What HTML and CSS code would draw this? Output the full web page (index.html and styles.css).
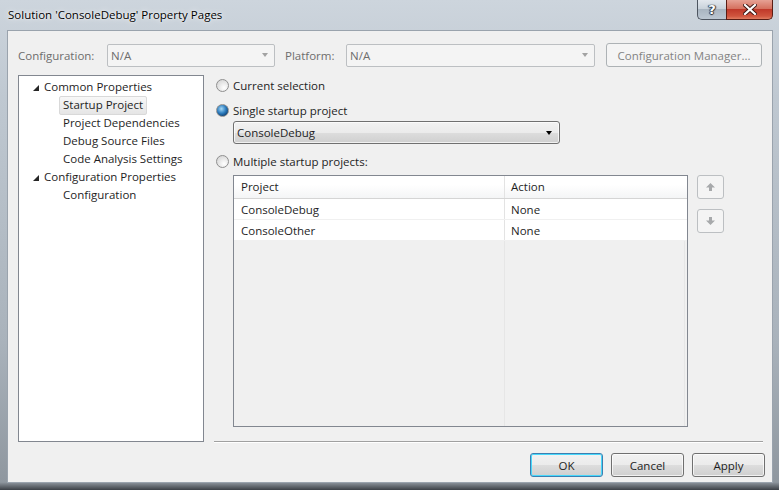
FILE: index.html
```html
<!DOCTYPE html>
<html lang="en">
  <head>
    <meta charset="UTF-8" />
    <title>Solution 'ConsoleDebug' Property Pages</title>
    <link rel="stylesheet" href="styles.css">
  </head>
  <body>
    <div class="window">
      <div class="titlebar">
        <span class="title">Solution 'ConsoleDebug' Property Pages</span>
        <div class="caption">
          <span class="cap help">?</span>
          <span class="cap close">
            <svg width="14" height="11" viewBox="0 0 14 11">
              <path d="M2 1 L12 10 M12 1 L2 10" stroke="#3b1410" stroke-width="4" stroke-linecap="square" />
              <path d="M2 1 L12 10 M12 1 L2 10" stroke="#fff" stroke-width="2.2" stroke-linecap="square" />
            </svg>
          </span>
        </div>
      </div>

      <div class="client">
        <div class="config-row">
          <span class="label label-config">Configuration:</span>
          <div class="combo disabled combo-config"><span>N/A</span><i class="arrow"></i></div>
          <span class="label label-platform">Platform:</span>
          <div class="combo disabled combo-platform"><span>N/A</span><i class="arrow"></i></div>
          <button class="btn disabled btn-manager">Configuration Manager...</button>
        </div>

        <div class="main">
          <div class="tree">
            <div class="node top"><i class="glyph"></i>Common Properties</div>
            <div class="node child"><span class="selected">Startup Project</span></div>
            <div class="node child"><span>Project Dependencies</span></div>
            <div class="node child"><span>Debug Source Files</span></div>
            <div class="node child"><span>Code Analysis Settings</span></div>
            <div class="node top"><i class="glyph"></i>Configuration Properties</div>
            <div class="node child"><span>Configuration</span></div>
          </div>

          <div class="pane">
            <label class="radio r1"><i class="dot"></i>Current selection</label>
            <label class="radio r2"><i class="dot checked"></i>Single startup project</label>
            <div class="combo project-combo"><span>ConsoleDebug</span><i class="arrow dark"></i></div>
            <label class="radio r3"><i class="dot"></i>Multiple startup projects:</label>

            <div class="grid-row">
              <div class="grid">
                <div class="grid-head">
                  <div class="col-project">Project</div>
                  <div class="col-action">Action</div>
                </div>
                <div class="grid-line">
                  <div class="col-project">ConsoleDebug</div>
                  <div class="col-action">None</div>
                </div>
                <div class="grid-line">
                  <div class="col-project">ConsoleOther</div>
                  <div class="col-action">None</div>
                </div>
                <div class="grid-empty">
                  <div class="col-project"></div>
                  <div class="col-action"></div>
                </div>
              </div>
              <div class="movers">
                <button class="mover">
                  <svg width="9" height="8" viewBox="0 0 9 8"><path d="M4.5 0 L9 4.5 H6 V8 H3 V4.5 H0 Z" fill="#a7a9ab" /></svg>
                </button>
                <button class="mover">
                  <svg width="9" height="8" viewBox="0 0 9 8"><path d="M4.5 8 L9 3.5 H6 V0 H3 V3.5 H0 Z" fill="#a7a9ab" /></svg>
                </button>
              </div>
            </div>
          </div>
        </div>

        <div class="buttons">
          <button class="btn default">OK</button>
          <button class="btn">Cancel</button>
          <button class="btn">Apply</button>
        </div>
      </div>
    </div>
  </body>
</html>
```

FILE: styles.css
```css
body {
  margin: 0;
  width: 779px;
  height: 490px;
  overflow: hidden;
  font-family: "Open Sans", "Noto Sans", sans-serif;
  font-size: 11.5px;
  color: #1e1e1e;
  background: linear-gradient(180deg, #cdd5dd 0%, #bfc8d1 20%, #a9b2bb 70%, #8f979f 98.4%, #3c4046 100%);
}

.window {
  height: 490px;
  padding: 0 6px 7px 7px;
  box-sizing: border-box;
  display: flex;
  flex-direction: column;
}

.titlebar {
  height: 30px;
  display: flex;
  justify-content: space-between;
  align-items: flex-start;
}

.title {
  margin: 7px 0 0 1px;
  font-size: 11.5px;
  color: #000;
  text-shadow: 0 0 6px rgba(255, 255, 255, 0.9), 0 0 2px rgba(255, 255, 255, 0.9);
}

.caption {
  display: flex;
}

.cap {
  height: 20px;
  display: flex;
  align-items: center;
  justify-content: center;
  border: 1px solid #4d5560;
  border-top: none;
  box-sizing: border-box;
}

.help {
  width: 29px;
  border-right: none;
  border-bottom-left-radius: 5px;
  background: linear-gradient(180deg, #e3e8ee 0%, #c9d2db 45%, #a9b5c1 50%, #bcc7d2 100%);
  color: #fff;
  font-family: "DejaVu Sans", sans-serif;
  font-weight: bold;
  font-size: 13px;
  text-shadow: 0 0 1px #2d3540, 1px 0 1px #2d3540, -1px 0 1px #2d3540, 0 1px 1px #2d3540;
}

.close {
  width: 47px;
  border-color: #5a1d14;
  border-bottom-right-radius: 5px;
  background: linear-gradient(180deg, #e6a194 0%, #d5715f 45%, #c0392a 50%, #d0553e 85%, #e07d62 100%);
}

.client {
  flex: 1;
  background: #f0f0f0;
  border: 1px solid #9aa3ad;
  display: flex;
  flex-direction: column;
}

/* configuration row */

.config-row {
  display: flex;
  align-items: center;
  margin: 12px 0 0 10px;
  height: 24px;
}

.label {
  color: #6d6d6d;
}

.label-config {
  width: 89px;
}

.label-platform {
  width: 61px;
  margin-left: 10px;
}

.combo {
  height: 23px;
  box-sizing: border-box;
  display: flex;
  align-items: center;
  justify-content: space-between;
  padding: 0 6px 0 3px;
  border: 1px solid #707070;
  border-radius: 2px;
}

.combo.disabled {
  border-color: #bcbfc2;
  background: #f4f4f4;
  color: #6d6d6d;
}

.combo-config {
  width: 168px;
}

.combo-platform {
  width: 249px;
}

.arrow {
  width: 0;
  height: 0;
  border-left: 3.5px solid transparent;
  border-right: 3.5px solid transparent;
  border-top: 4px solid #a2a2a2;
}

.arrow.dark {
  border-top-color: #000;
}

.btn {
  font: inherit;
  color: #1e1e1e;
  width: 73px;
  height: 24px;
  padding: 0;
  border: 1px solid #707070;
  border-radius: 3px;
  background: linear-gradient(180deg, #f2f2f2 0%, #ebebeb 50%, #dddddd 51%, #cfcfcf 100%);
  box-shadow: inset 0 0 0 1px rgba(255, 255, 255, 0.7);
}

.btn.disabled {
  border-color: #adb2b5;
  background: #f4f4f4;
  color: #838383;
  box-shadow: none;
}

.btn-manager {
  width: 156px;
  margin-left: 11px;
}

/* tree and pane */

.main {
  display: flex;
  margin: 8px 0 0 10px;
  height: 367px;
}

.tree {
  width: 186px;
  box-sizing: border-box;
  background: #fff;
  border: 1px solid #828790;
  padding-top: 2px;
}

.node {
  height: 18px;
  line-height: 18px;
  white-space: nowrap;
}

.node.top {
  padding-left: 14px;
}

.glyph {
  display: inline-block;
  width: 6px;
  height: 6px;
  margin-right: 5px;
  background: #262626;
  clip-path: polygon(100% 0, 100% 100%, 0 100%);
  vertical-align: 0;
}

.node.child {
  padding-left: 40px;
}

.node.child span {
  display: inline-block;
  padding: 0 3px;
  height: 17px;
  line-height: 16px;
  border: 1px solid transparent;
  border-radius: 2px;
}

.node.child span.selected {
  border-color: #d9d9d9;
  background: linear-gradient(180deg, #f8f8f8, #e5e5e5);
}

.pane {
  width: 549px;
  margin-left: 10px;
  padding-left: 2px;
  box-sizing: border-box;
  border-bottom: 1px solid #a0a0a0;
  box-shadow: 0 1px 0 #fff;
  display: flex;
  flex-direction: column;
  align-items: flex-start;
}

.radio {
  display: flex;
  align-items: center;
  height: 18px;
}

.r1 {
  margin-top: 1px;
}

.r2 {
  margin-top: 7px;
}

.r3 {
  margin-top: 8px;
}

.dot {
  width: 13px;
  height: 13px;
  box-sizing: border-box;
  border-radius: 50%;
  border: 1px solid #8f8f8f;
  background: radial-gradient(circle at 65% 70%, #ffffff 0%, #e6e6e6 50%, #cfcfcf 100%);
  margin-right: 4px;
}

.dot.checked {
  background: radial-gradient(circle at 40% 35%, #a6d9f6 0%, #2e7ec0 45%, #0d3f72 80%, #dcdcdc 82%, #f4f4f4 100%);
}

.project-combo {
  width: 327px;
  margin: 2px 0 0 17px;
  border-radius: 3px;
  background: linear-gradient(180deg, #f2f2f2 0%, #ebebeb 50%, #dddddd 51%, #cfcfcf 100%);
  box-shadow: inset 0 0 0 1px rgba(255, 255, 255, 0.7);
  padding-right: 7px;
}

/* startup projects grid */

.grid-row {
  display: flex;
  margin: 5px 0 0 17px;
}

.grid {
  width: 455px;
  height: 252px;
  box-sizing: border-box;
  border: 1px solid #828790;
  background: #f0f0f0;
  display: flex;
  flex-direction: column;
}

.grid-head,
.grid-line,
.grid-empty {
  display: flex;
}

.grid-head {
  height: 23px;
  line-height: 22px;
  background: linear-gradient(180deg, #ffffff 0%, #ffffff 40%, #f4f5f6 100%);
  border-bottom: 1px solid #d5d5d5;
  box-sizing: border-box;
}

.grid-line {
  height: 21px;
  line-height: 21px;
  background: #fff;
  border-bottom: 1px solid #f0f0f0;
  box-sizing: border-box;
}

.col-project {
  width: 271px;
  padding-left: 7px;
  box-sizing: border-box;
  border-right: 1px solid #e3e3e3;
}

.col-action {
  flex: 1;
  padding-left: 6px;
  border-right: 1px solid #e6e6e6;
  margin-right: 2px;
}

.grid-head .col-action,
.grid-line .col-action {
  border-right: none;
  margin-right: 0;
}

.grid-empty {
  flex: 1;
}

.grid-empty .col-project {
  border-right-color: #e6e6e6;
}

.movers {
  margin-left: 9px;
  display: flex;
  flex-direction: column;
  gap: 10px;
}

.mover {
  width: 27px;
  height: 24px;
  padding: 0;
  border: 1px solid #bcbfc2;
  border-radius: 3px;
  background: #f4f4f4;
  display: flex;
  align-items: center;
  justify-content: center;
}

/* dialog buttons */

.buttons {
  display: flex;
  justify-content: flex-end;
  gap: 8px;
  margin: 11px 7px 0 0;
}

.btn.default {
  border-color: #3c7fb1;
  box-shadow: inset 0 0 0 1px #48d8fb;
}
```
